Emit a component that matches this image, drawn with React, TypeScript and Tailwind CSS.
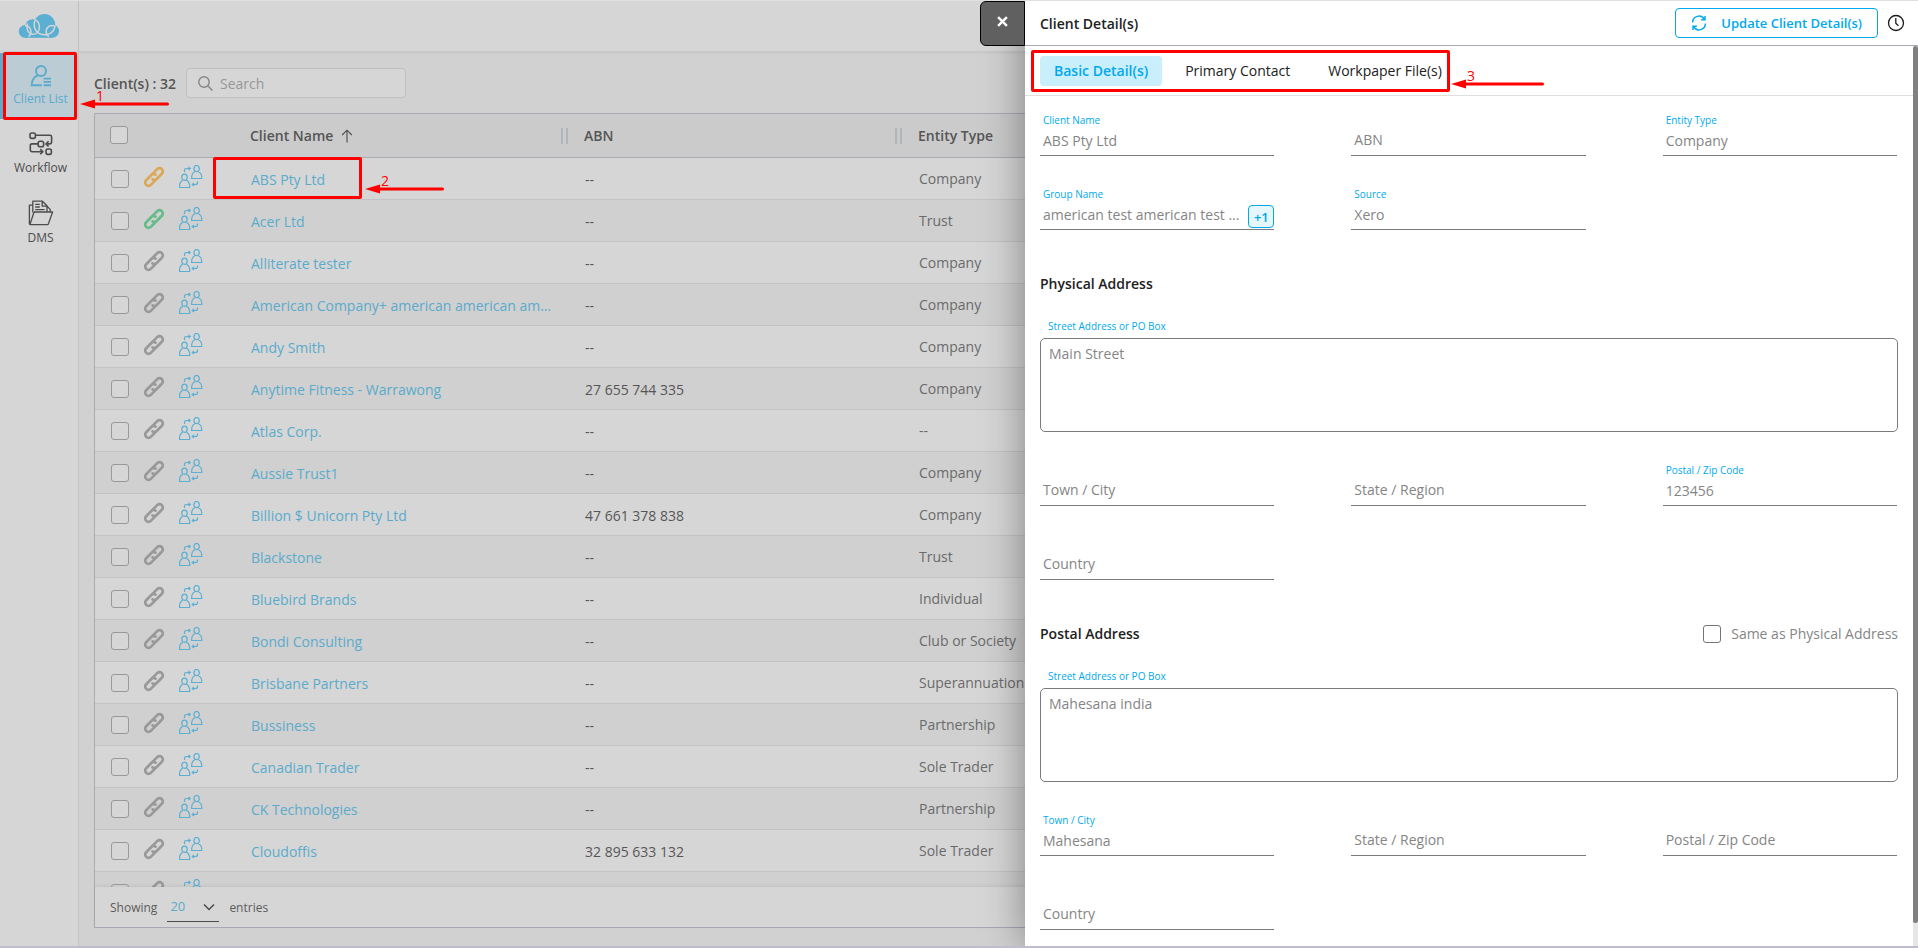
import { useId } from "react";

const clients = [
    { name: "ABS Pty Ltd", abn: "--", type: "Company", link: "text-[#dba856]" },
    { name: "Acer Ltd", abn: "--", type: "Trust", link: "text-[#67bb8b]" },
    { name: "Alliterate tester", abn: "--", type: "Company" },
    { name: "American Company+ american american american", abn: "--", type: "Company" },
    { name: "Andy Smith", abn: "--", type: "Company" },
    { name: "Anytime Fitness - Warrawong", abn: "27 655 744 335", type: "Company" },
    { name: "Atlas Corp.", abn: "--", type: "--" },
    { name: "Aussie Trust1", abn: "--", type: "Company" },
    { name: "Billion $ Unicorn Pty Ltd", abn: "47 661 378 838", type: "Company" },
    { name: "Blackstone", abn: "--", type: "Trust" },
    { name: "Bluebird Brands", abn: "--", type: "Individual" },
    { name: "Bondi Consulting", abn: "--", type: "Club or Society" },
    { name: "Brisbane Partners", abn: "--", type: "Superannuation" },
    { name: "Bussiness", abn: "--", type: "Partnership" },
    { name: "Canadian Trader", abn: "--", type: "Sole Trader" },
    { name: "CK Technologies", abn: "--", type: "Partnership" },
    { name: "Cloudoffis", abn: "32 895 633 132", type: "Sole Trader" },
    { name: "", abn: "", type: "" },
];

function CloudLogo() {
    return (
        <svg width="42" height="26" viewBox="0 0 42 26" aria-label="Home">
            <g fill="#5aafd2">
                <circle cx="7.200" cy="18.400" r="6.400" />
                <circle cx="14.600" cy="13.400" r="7.200" />
                <circle cx="26.400" cy="11.800" r="10.800" />
                <circle cx="34.400" cy="18.200" r="6.600" />
                <rect x="7" y="14" width="27" height="10.800" />
            </g>
            <g fill="none" stroke="#d6d6d6" strokeWidth="1.500">
                <path d="M7 12.600a6 6 0 0 1 6 6.400 6 6 0 0 1-2.400 4.600" />
                <path d="M9.400 10.600c-1.600 4.800.6 10 5.200 10.600 4.400.4 7-3.400 6.800-7.600-.2-3.400-2-6-4.600-7" />
                <path d="M16.800 7.400c-2 5.400.2 11 4.600 13.200 4.600 2.200 10.800 1.400 13.600-2.600 1.300-2 2-3.600 2-5.600" />
                <path d="M36.500 12.800c-4-1.400-8.200 1.200-8.400 5.200-.1 2.400.9 4.400 2.800 5.600" />
            </g>
        </svg>
    );
}

function ClientListIcon() {
    return (
        <svg width="24" height="24" viewBox="0 0 24 24" fill="none" stroke="#5aabcc" strokeWidth="1.900">
            <circle cx="12" cy="7" r="5" />
            <path d="M9 11.200C4.800 13 2.800 16.400 2.600 21.200h10.200" />
            <path d="M14.600 14.600h7.400M14.600 17.900h7.400M14.600 21.200h7.400" />
        </svg>
    );
}

function WorkflowIcon() {
    return (
        <svg width="24" height="24" viewBox="0 0 24 24" fill="none" stroke="#4c4c4c" strokeWidth="1.600">
            <rect x="1" y="1" width="5.400" height="5.400" rx="1.800" />
            <rect x="9.200" y="9.300" width="5.400" height="5.400" rx="1.800" />
            <rect x="17" y="17" width="5.400" height="5.400" rx="1.800" />
            <path d="M6.400 3.300h14.600q1.600 0 1.600 1.600v5.400q0 1.600-1.600 1.600h-3.600" />
            <path d="M19.600 9.300 17 11.900l2.600 2.600" />
            <path d="M9.200 11.900H2.900q-1.600 0-1.600 1.600v4.600q0 1.600 1.600 1.600h10.600" />
            <path d="m11.200 17.100 2.600 2.600-2.600 2.600" />
        </svg>
    );
}

function FolderIcon() {
    return (
        <svg width="26" height="26" viewBox="0 0 26 26" fill="none" stroke="#4c4c4c" strokeWidth="1.300" strokeLinejoin="round">
            <path d="M4.800 5.200H1.400v18.600q0 .8.8.8h17.200q.8 0 1-.7L24.600 12H6.800q-.8 0-1 .8L2 24.400" />
            <path d="M4.800 12.400V1.200h9.600l4.600 4.600V12M14.200 1.400v4.800h4.800M19.200 6.400l3 3V12" />
            <path d="M7.200 4.400h4.600M7.200 7h4.600M7.200 9.600h9.400" />
        </svg>
    );
}

function ChainIcon({ className }: { className: string }) {
    return (
        <svg width="22" height="22" viewBox="-11 -11 22 22" className={className} fill="none" stroke="currentColor" strokeWidth="2.700" strokeLinecap="round">
            <g transform="rotate(-45)">
                <path d="M1.500-3.300H7.800a3.300 3.300 0 0 1 0 6.600H.5A3.300 3.300 0 0 1-2.700.6" />
                <path d="M-1.500 3.300H-7.800a3.300 3.300 0 0 1 0-6.600H-.5A3.300 3.300 0 0 1 2.700-.6" />
            </g>
        </svg>
    );
}

function SwitchClientIcon() {
    return (
        <svg width="24" height="24" viewBox="0 0 24 24" fill="none" stroke="#5aafd2" strokeWidth="1.200">
            <ellipse cx="5.500" cy="12.200" rx="2.700" ry="3.100" />
            <path d="M3.700 15.400C1.300 16.200.5 18 .5 22.500h10.300c0-4.500-.8-6.300-3.400-7.100" />
            <ellipse cx="17.600" cy="3.600" rx="2.700" ry="3.100" />
            <path d="M15.800 6.700c-2.400.8-3.200 2.400-3.200 6.800h10.200c0-4.400-.8-6-3.400-6.800" />
            <path d="M5.500 7V5.500q0-2 2-2h3.500M9.500 2l1.700 1.500L9.500 5" />
            <path d="M18.500 16.500v1q0 2-2 2h-3M15 18l-1.700 1.500L15 21" />
        </svg>
    );
}

function Checkbox({ label, dimmed = true }: { label?: string; dimmed?: boolean }) {
    return (
        <input
            type="checkbox"
            aria-label={label}
            className={
                dimmed
                    ? "block size-[18px] shrink-0 appearance-none rounded-[3px] border border-[#999999] bg-[#d6d6d6]"
                    : "block size-[18px] shrink-0 appearance-none rounded-[3px] border border-[#757575] bg-white"
            }
        />
    );
}

function Sidebar() {
    return (
        <aside className="flex w-[79px] shrink-0 flex-col border-r border-[#c4c4c4] bg-[#d6d6d6]">
            <a href="#home" className="flex h-[51px] items-center justify-center border-b border-[#c8c8c8]">
                <CloudLogo />
            </a>
            <nav className="flex flex-col gap-[3px] pt-px text-xs leading-4 text-[#4c4c4c]">
                <a href="#clients" className="flex h-[66px] flex-col items-center gap-[3px] border-l-[3px] border-[#5aabcc] bg-[#bbccd4] pt-[11px] text-[#5aabcc]">
                    <ClientListIcon />
                    Client List
                </a>
                <a href="#workflow" className="flex h-[66px] flex-col items-center gap-1 border-l-[3px] border-transparent pt-[10px]">
                    <WorkflowIcon />
                    Workflow
                </a>
                <a href="#dms" className="flex h-[66px] flex-col items-center gap-1 border-l-[3px] border-transparent pt-[9px]">
                    <FolderIcon />
                    DMS
                </a>
            </nav>
        </aside>
    );
}

function ColumnGrip() {
    return <span className="h-4 w-[7px] border-x-2 border-[#b0b5ba]" />;
}

function ClientTable() {
    return (
        <div className="flex min-h-0 flex-1 flex-col border border-[#a9abb3] bg-[#d6d6d6]">
            <div className="min-h-0 flex-1 overflow-hidden">
                <table className="w-full table-fixed border-collapse text-left">
                    <thead className="bg-[#cbcbcb] text-[#555555]">
                        <tr className="h-[43px] border-b border-[#a9abb3]">
                            <th className="w-[139px] pl-[15px]"><Checkbox label="Select all clients" /></th>
                            <th className="w-[334px] pt-[2px] pl-4 font-semibold">
                                <div className="flex items-center">
                                    Client Name
                                    <svg width="12" height="14" viewBox="0 0 12 14" className="ml-2" fill="none" stroke="#4c4c4c" strokeWidth="1.100">
                                        <path d="M6 13.500V1.500M1.200 6 6 1.200 10.800 6" />
                                    </svg>
                                    <span className="flex-1" />
                                    <ColumnGrip />
                                </div>
                            </th>
                            <th className="w-[334px] pt-[2px] pl-4 font-semibold">
                                <div className="flex items-center justify-between">
                                    ABN
                                    <ColumnGrip />
                                </div>
                            </th>
                            <th className="pt-[2px] pl-4 font-semibold">Entity Type</th>
                        </tr>
                    </thead>
                    <tbody>
                        {clients.map((client, i) => (
                            <tr key={i} className="h-[42px] border-b border-[#c3c3c3] even:bg-[#d0d0d0]">
                                <td className="pt-[2px] pl-4">
                                    <div className="flex items-center">
                                        <Checkbox label={`Select ${client.name || "client"}`} />
                                        <ChainIcon className={`mb-1 ml-[14px] ${client.link ?? "text-[#999999]"}`} />
                                        <span className="mb-1 ml-[14px]"><SwitchClientIcon /></span>
                                    </div>
                                </td>
                                <td className="pr-4 pl-[17px]">
                                    <a href="#client" className="block truncate pt-1 text-[#5aabcc]">{client.name}</a>
                                </td>
                                <td className="pt-1 pl-[17px] text-[#565656]">{client.abn}</td>
                                <td className="pt-[2px] pl-[17px] text-[#6a6a6a]">{client.type}</td>
                            </tr>
                        ))}
                    </tbody>
                </table>
            </div>
            <div className="flex h-10 shrink-0 items-center pt-[2px] pl-[15px] text-xs text-[#5c5c5c] shadow-[0_-1px_3px_rgba(0,0,0,0.08)]">
                <label htmlFor="page-size">Showing</label>
                <div className="relative ml-[10px] border-b border-[#4c4c4c]">
                    <select id="page-size" defaultValue="20" className="block h-[26px] w-[52px] appearance-none bg-transparent pb-[2px] pl-[3px] text-[13px] text-[#5aabcc]">
                        <option>20</option>
                        <option>50</option>
                        <option>100</option>
                    </select>
                    <svg width="12" height="8" viewBox="0 0 12 8" className="pointer-events-none absolute top-2 right-1" fill="none" stroke="#4c4c4c" strokeWidth="1.500">
                        <path d="m1 1.500 5 5 5-5" />
                    </svg>
                </div>
                <span className="ml-[10px]">entries</span>
            </div>
        </div>
    );
}

function Field({ label, value, more }: { label: string; value?: string; more?: string }) {
    const id = useId();
    return (
        <div className={value ? "" : "pt-4"}>
            {value && <label htmlFor={id} className="block h-4 pl-[3px] text-[10px] leading-4 text-[#00a9ee]">{label}</label>}
            <div className={value ? "flex h-7 border-b border-[#7b7b7b] pb-[2px]" : "flex h-7 border-b border-[#7b7b7b] pb-[3px]"}>
                <input
                    id={id}
                    readOnly
                    aria-label={label}
                    defaultValue={value}
                    placeholder={label}
                    className="min-w-0 flex-1 bg-transparent pl-[3px] text-[#858585] outline-none placeholder:text-[#858585]"
                />
                {more && (
                    <button type="button" className="mt-[3px] h-[23px] w-[26px] rounded border border-[#00a9ee] bg-[#e5f6fd] text-[13px] leading-5 font-semibold text-[#00a9ee]">{more}</button>
                )}
            </div>
        </div>
    );
}

function StreetAddress({ value }: { value: string }) {
    const id = useId();
    return (
        <div className="mt-[22px]">
            <label htmlFor={id} className="block pl-2 text-[10px] leading-4 text-[#00a9ee]">Street Address or PO Box</label>
            <textarea
                id={id}
                readOnly
                defaultValue={value}
                className="mt-1 block h-[94px] w-full resize-none rounded-[5px] border border-[#7b7b7b] px-2 py-[5px] text-[#858585] outline-none"
            />
        </div>
    );
}

function ClientDrawer() {
    return (
        <section className="absolute inset-y-0 right-0 flex w-[893px] flex-col bg-white shadow-[0_0_40px_rgba(0,0,0,0.4)]">
            <button
                type="button"
                aria-label="Close"
                className="absolute top-0 right-full flex h-[45px] w-[45px] items-center justify-center rounded-l-md border border-black bg-[#606060] pb-1"
            >
                <svg width="11" height="11" viewBox="0 0 12 12" stroke="#ffffff" strokeWidth="2.600">
                    <path d="m1.200 1.200 9.600 9.600M10.800 1.200 1.200 10.800" />
                </svg>
            </button>
            <header className="flex h-[45px] shrink-0 items-center border-b border-[#a9a9b4] pr-[13px] pl-[15px]">
                <h2 className="flex-1 pt-[2px] font-semibold text-[#212121]">Client Detail(s)</h2>
                <button type="button" className="flex h-[30px] items-center rounded border border-[#00a9ee] px-[15px] text-[13px] font-semibold text-[#00a9ee]">
                    <svg width="16" height="16" viewBox="0 0 16 16" className="mr-[14px]" fill="none" stroke="#00a9ee" strokeWidth="1.500">
                        <path d="M1.600 7.400A6.300 6.300 0 0 1 13.400 4.400M14.400 8.600A6.300 6.300 0 0 1 2.600 11.600" />
                        <path d="M14 1v3.800h-3.800M2 15v-3.800h3.800" />
                    </svg>
                    Update Client Detail(s)
                </button>
                <button type="button" aria-label="History" className="ml-[9px]">
                    <svg width="18" height="18" viewBox="0 0 18 18" className="block" fill="none" stroke="#1c1c1c" strokeWidth="1.300">
                        <circle cx="9" cy="9" r="7.500" />
                        <path d="M8.800 4v5.200l2.600 2.600" />
                    </svg>
                </button>
            </header>

            <div className="flex min-h-0 flex-1">
                <div className="min-w-0 flex-1 overflow-hidden">
                    <div role="tablist" className="flex gap-2 border-b border-[#dfdfdf] pt-[10px] pb-[9px] pl-[15px] text-[#212121]">
                        <button role="tab" aria-selected="true" className="h-[30px] rounded bg-[#c9eefc] px-[14px] font-semibold text-[#00a9ee]">Basic Detail(s)</button>
                        <button role="tab" aria-selected="false" className="h-[30px] px-[15px]">Primary Contact</button>
                        <button role="tab" aria-selected="false" className="h-[30px] px-[15px]">Workpaper File(s)</button>
                    </div>

                    <form className="px-[15px] pt-4">
                        <div className="grid grid-cols-3 gap-x-[77px] gap-y-[30px] pr-px">
                            <Field label="Client Name" value="ABS Pty Ltd" />
                            <Field label="ABN" />
                            <Field label="Entity Type" value="Company" />
                            <Field label="Group Name" value="american test american test ..." more="+1" />
                            <Field label="Source" value="Xero" />
                        </div>

                        <h3 className="mt-[42px] leading-6 font-semibold text-[#212121]">Physical Address</h3>
                        <StreetAddress value="Main Street" />
                        <div className="mt-[30px] grid grid-cols-3 gap-x-[77px] gap-y-[30px] pr-px">
                            <Field label="Town / City" />
                            <Field label="State / Region" />
                            <Field label="Postal / Zip Code" value="123456" />
                            <Field label="Country" />
                        </div>

                        <div className="mt-[42px] flex items-center justify-between leading-6">
                            <h3 className="font-semibold text-[#212121]">Postal Address</h3>
                            <label className="flex items-center gap-[10px] text-[#858585]">
                                <Checkbox dimmed={false} />
                                Same as Physical Address
                            </label>
                        </div>
                        <StreetAddress value="Mahesana india" />
                        <div className="mt-[30px] grid grid-cols-3 gap-x-[77px] gap-y-[30px] pr-px">
                            <Field label="Town / City" value="Mahesana" />
                            <Field label="State / Region" />
                            <Field label="Postal / Zip Code" />
                            <Field label="Country" />
                        </div>
                    </form>
                </div>
                <div className="flex w-[5px] flex-col bg-[#e6e6e6] pb-[23px]">
                    <div className="flex-1 rounded-sm bg-[#808080]" />
                </div>
            </div>
        </section>
    );
}

// Red callouts drawn on top of the screen
function Arrow({ className, length, step }: { className: string; length: number; step: string }) {
    return (
        <div className={`absolute ${className}`}>
            <svg width={length} height="10" className="block" fill="#ff0000">
                <path d="M0 5 15 .5v9z" />
                <rect x="12" y="3.500" width={length - 12} height="3" rx="1.500" />
            </svg>
            <span className="absolute bottom-[5px] left-4 text-sm leading-4 text-[#ff0000]">{step}</span>
        </div>
    );
}

function Callouts() {
    return (
        <div className="pointer-events-none">
            <div className="absolute top-[51px] left-[3px] h-[68px] w-[74px] rounded-xs border-3 border-[#ff0000]" />
            <Arrow className="top-[98px] left-[80px]" length={89} step="1" />
            <div className="absolute top-[156px] left-[213px] h-[42px] w-[149px] rounded-xs border-3 border-[#ff0000]" />
            <Arrow className="top-[183px] left-[365px]" length={79} step="2" />
            <div className="absolute top-[49px] right-[468px] h-[42px] w-[419px] rounded-xs border-3 border-[#ff0000]" />
            <Arrow className="top-[78px] right-[374px]" length={93} step="3" />
        </div>
    );
}

export default function App() {
    return (
        <div className="relative flex h-screen overflow-hidden border-t border-b-2 border-t-[#e0e0e0] border-b-[#bcbcd2] bg-[#d1d1d1] font-['Open_Sans','Noto_Sans',sans-serif] text-sm">
            <Sidebar />
            <main className="flex min-w-0 flex-1 flex-col">
                <header className="h-[51px] shrink-0 border-b border-[#c8c8c8] bg-[#d6d6d6] shadow-[0_1px_2px_rgba(0,0,0,0.06)]" />
                <div className="flex min-h-0 flex-1 flex-col px-[15px] pt-4 pb-[18px]">
                    <div className="mb-[15px] flex items-center gap-[10px]">
                        <h1 className="pt-[2px] font-semibold text-[#555555]">Client(s) : 32</h1>
                        <label className="flex h-[30px] w-[220px] items-center gap-[7px] rounded border border-[#c0c0c0] bg-[#d6d6d6] pl-[11px]">
                            <svg width="15" height="15" viewBox="0 0 15 15" fill="none" stroke="#858585" strokeWidth="1.400">
                                <circle cx="6" cy="6" r="5.200" />
                                <path d="m9.800 9.800 4.600 4.600" />
                            </svg>
                            <input type="search" aria-label="Search clients" placeholder="Search" className="min-w-0 flex-1 bg-transparent pt-px outline-none placeholder:text-[#979797]" />
                        </label>
                    </div>
                    <ClientTable />
                </div>
            </main>
            <ClientDrawer />
            <Callouts />
        </div>
    );
}
